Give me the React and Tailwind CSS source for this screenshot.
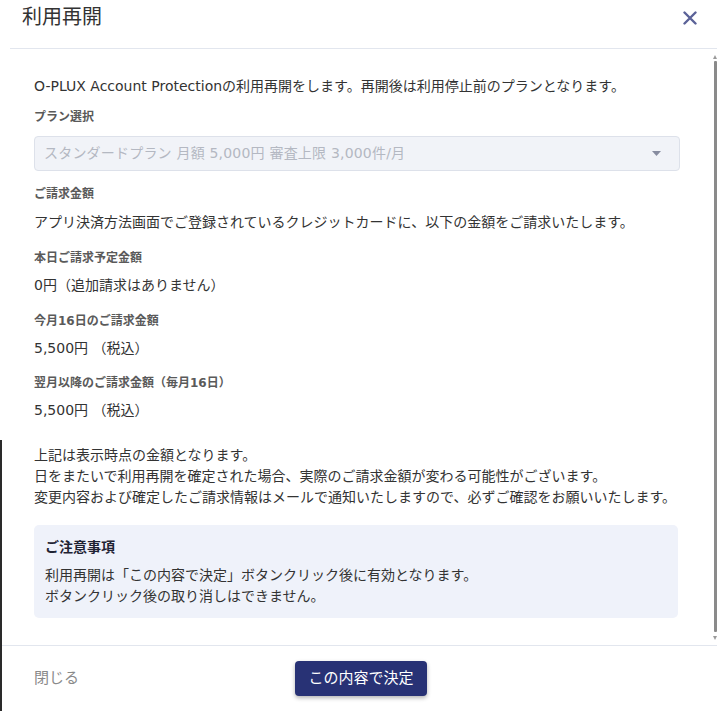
import React from "react";

const Label = ({ children, className = "" }) => (
  <div className={`text-[12px] leading-[18px] font-bold text-[#5a5a5a] ${className}`}>{children}</div>
);

const Value = ({ children, className = "" }) => (
  <div className={`text-[14px] leading-[21px] text-[#333] ${className}`}>{children}</div>
);

export default function App() {
  return (
    <div
      className="relative w-[717px] h-[711px] bg-white overflow-hidden flex flex-col text-[#333]"
      style={{ fontFamily: '"DejaVu Sans", "Noto Sans CJK JP", sans-serif' }}
    >
      {/* header */}
      <div className="h-[48px] flex items-start justify-between pl-[22px] pr-[20px] pt-[3px] shrink-0">
        <div className="text-[20px] leading-[28px] text-[#333]">利用再開</div>
        <svg width="14" height="14" viewBox="0 0 14 14" className="mt-[8px]">
          <path d="M1.5 1.5 L12.5 12.5 M12.5 1.5 L1.5 12.5" stroke="#5b6298" strokeWidth="2.4" strokeLinecap="round" />
        </svg>
      </div>
      <div className="ml-[10px] border-t border-[#e2e6ee] shrink-0" />

      {/* body */}
      <div className="flex flex-1 min-h-0">
        <div className="flex-1 pl-[34px] pr-[33px] pt-[27px]">
          <Value>O-PLUX Account Protectionの利用再開をします。再開後は利用停止前のプランとなります。</Value>

          <Label className="mt-[11px]">プラン選択</Label>
          <div className="mt-[10px] h-[35px] rounded-[4px] border border-[#dde1ea] bg-[#f1f3f8] flex items-center justify-between pl-[9px] pr-[18px]">
            <span className="text-[14px] text-[#b4b8c2] tracking-[0.2px]">スタンダードプラン 月額 5,000円 審査上限 3,000件/月</span>
            <svg width="9" height="5" viewBox="0 0 9 5">
              <path d="M0 0 L9 0 L4.5 5 Z" fill="#878ca0" />
            </svg>
          </div>

          <Label className="mt-[14px]">ご請求金額</Label>
          <Value className="mt-[9px]">アプリ決済方法画面でご登録されているクレジットカードに、以下の金額をご請求いたします。</Value>

          <Label className="mt-[16px]">本日ご請求予定金額</Label>
          <Value className="mt-[8px]">0円（追加請求はありません）</Value>

          <Label className="mt-[16px]">今月16日のご請求金額</Label>
          <Value className="mt-[8px]">5,500円 （税込）</Value>

          <Label className="mt-[15px]">翌月以降のご請求金額（毎月16日）</Label>
          <Value className="mt-[8px]">5,500円 （税込）</Value>

          <div className="mt-[24px] text-[14px] leading-[21px] text-[#333]">
            <div>上記は表示時点の金額となります。</div>
            <div>日をまたいで利用再開を確定された場合、実際のご請求金額が変わる可能性がございます。</div>
            <div>変更内容および確定したご請求情報はメールで通知いたしますので、必ずご確認をお願いいたします。</div>
          </div>

          <div className="mt-[17px] mr-[2px] rounded-[5px] bg-[#eff2fa] px-[11px] pt-[12px] pb-[11px]">
            <div className="text-[14px] leading-[20px] font-bold text-[#1f2333]">ご注意事項</div>
            <div className="mt-[8px] text-[14px] leading-[21px] text-[#333]">
              <div>利用再開は「この内容で決定」ボタンクリック後に有効となります。</div>
              <div>ボタンクリック後の取り消しはできません。</div>
            </div>
          </div>
        </div>

        {/* scrollbar */}
        <div className="w-[4px] flex flex-col items-center pt-[6px] pb-[5px]">
          <svg width="4" height="4" viewBox="0 0 4 4">
            <path d="M0 4 L2 0 L4 4 Z" fill="#9a9a9a" />
          </svg>
          <div className="mt-[2px] w-[3px] flex-1 bg-[#8a8a8a] rounded-[1px]" />
          <svg width="4" height="4" viewBox="0 0 4 4" className="mt-[4px]">
            <path d="M0 0 L4 0 L2 4 Z" fill="#9a9a9a" />
          </svg>
        </div>
      </div>

      {/* footer */}
      <div className="ml-[2px] border-t border-[#e2e6ee] shrink-0" />
      <div className="h-[65px] shrink-0 grid grid-cols-[1fr_auto_1fr] items-center pl-[34px] pr-[29px]">
        <div className="text-[15px] text-[#8a8a8a]">閉じる</div>
        <button className="h-[35px] w-[132px] rounded-[4px] bg-[#283275] text-white text-[15px] shadow-[0_2px_4px_rgba(0,0,0,0.3)]">
          この内容で決定
        </button>
        <div />
      </div>

      {/* window edge behind dialog */}
      <div className="absolute left-0 top-[440px] bottom-0 w-[2px] bg-[#2a2a2a]" />
    </div>
  );
}
